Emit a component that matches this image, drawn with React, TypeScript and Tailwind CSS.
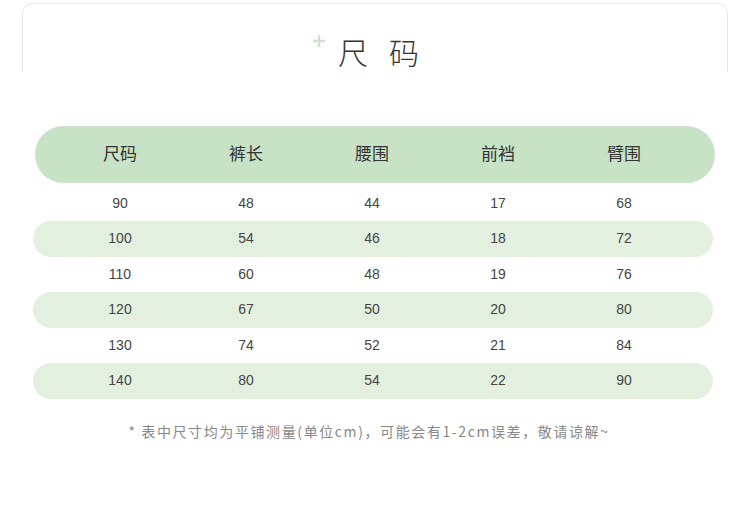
const headers = ["尺码", "裤长", "腰围", "前裆", "臂围"];

const rows = [
  ["90", "48", "44", "17", "68"],
  ["100", "54", "46", "18", "72"],
  ["110", "60", "48", "19", "76"],
  ["120", "67", "50", "20", "80"],
  ["130", "74", "52", "21", "84"],
  ["140", "80", "54", "22", "90"],
];

export default function App() {
  return (
    <div
      className="h-[512px] w-[750px] overflow-hidden bg-white"
      style={{ fontFamily: '"Liberation Sans", "Noto Sans CJK SC", sans-serif' }}
    >
      {/* title card */}
      <div className="mx-[22px] mt-[3px] flex h-[69px] items-end justify-center rounded-t-[10px] border border-b-0 border-[#e6ebe4] pb-[4px] pl-[28px]">
        <div className="relative flex items-center">
          <svg
            className="absolute left-[-26px] top-[0px]"
            width="14"
            height="14"
            viewBox="0 0 14 14"
          >
            <path d="M7 1v12M1 7h12" stroke="#cfe3cd" strokeWidth="2.4" />
          </svg>
          <span
            className="text-[30px] font-light leading-[34px] tracking-[21px] text-[#333]"
            style={{ fontFamily: '"Noto Sans CJK SC", sans-serif' }}
          >
            尺码
          </span>
        </div>
      </div>

      {/* header */}
      <div className="ml-[35px] mt-[54px] grid h-[57px] w-[680px] grid-cols-[repeat(5,126px)] items-center rounded-full bg-[#c7e2c4] pl-[22px] text-[17px] text-[#333]">
        {headers.map((h) => (
          <div key={h} className="text-center">
            {h}
          </div>
        ))}
      </div>

      {/* rows */}
      <div className="mt-[2.5px]">
        {rows.map((r, i) => (
          <div
            key={r[0]}
            className={
              "ml-[33px] grid h-[35.5px] w-[680px] grid-cols-[repeat(5,126px)] items-center rounded-full pl-[24px] text-[14px] text-[#444] " +
              (i % 2 === 1 ? "bg-[#e3f0e0]" : "bg-white")
            }
          >
            {r.map((c, j) => (
              <div key={j} className="text-center">
                {c}
              </div>
            ))}
          </div>
        ))}
      </div>

      {/* note */}
      <p
        className="mt-[22px] pr-[12px] text-center text-[14px] tracking-[1.6px] text-[#888]"
        style={{ fontFamily: '"Noto Sans CJK SC", sans-serif' }}
      >
        * 表中尺寸均为平铺测量(单位cm)，可能会有1-2cm误差，敬请谅解~
      </p>
    </div>
  );
}
